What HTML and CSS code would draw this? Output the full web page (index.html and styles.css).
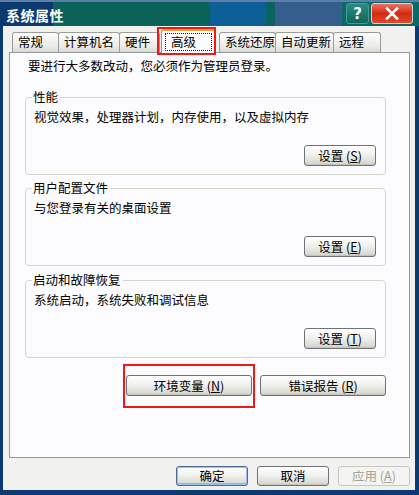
FILE: index.html
```html
<!DOCTYPE html>
<html lang="zh-CN">
<head>
<meta charset="utf-8">
<title>系统属性</title>
<link rel="stylesheet" href="styles.css">
</head>
<body>
<div class="window">
  <div class="titlebar">
    <span class="title">系统属性</span>
    <div class="tb-buttons">
      <div class="tb-btn help">?</div>
      <div class="tb-btn close">
        <svg width="14" height="13" viewBox="0 0 14 13"><path d="M2 1.5 L12 11.5 M12 1.5 L2 11.5" stroke="#fff" stroke-width="2.6" stroke-linecap="square"/></svg>
      </div>
    </div>
  </div>
  <div class="client">
    <div class="tabs">
      <div class="tab t1">常规</div>
      <div class="tab t2">计算机名</div>
      <div class="tab t3">硬件</div>
      <div class="tab selected"><span class="focus">高级</span><div class="mark mark-tab"></div></div>
      <div class="tab t5">系统还原</div>
      <div class="tab t6">自动更新</div>
      <div class="tab t7">远程</div>
    </div>
    <div class="panel">
      <p class="intro">要进行大多数改动，您必须作为管理员登录。</p>
      <div class="group">
        <span class="legend">性能</span>
        <p class="desc">视觉效果，处理器计划，内存使用，以及虚拟内存</p>
        <div class="group-actions"><button class="btn small">设置 (<u>S</u>)</button></div>
      </div>
      <div class="group">
        <span class="legend">用户配置文件</span>
        <p class="desc">与您登录有关的桌面设置</p>
        <div class="group-actions"><button class="btn small">设置 (<u>E</u>)</button></div>
      </div>
      <div class="group">
        <span class="legend">启动和故障恢复</span>
        <p class="desc">系统启动，系统失败和调试信息</p>
        <div class="group-actions"><button class="btn small">设置 (<u>T</u>)</button></div>
      </div>
      <div class="wide-row">
        <div class="marked"><button class="btn wide">环境变量 (<u>N</u>)</button><div class="mark mark-btn"></div></div>
        <button class="btn wide">错误报告 (<u>R</u>)</button>
      </div>
    </div>
    <div class="footer">
      <button class="btn foot default">确定</button>
      <button class="btn foot">取消</button>
      <button class="btn foot disabled">应用 (<u>A</u>)</button>
    </div>
  </div>
</div>
</body>
</html>
```

FILE: styles.css
```css
* { box-sizing: border-box; }
html, body { margin: 0; padding: 0; }
body {
  width: 419px;
  height: 495px;
  overflow: hidden;
  font-family: "Noto Sans CJK SC", "Noto Sans", sans-serif;
  font-size: 12px;
  color: #000;
  background: #0a2e62;
}
.window {
  width: 419px;
  height: 495px;
  display: flex;
  flex-direction: column;
  background: #0b3a72;
  padding: 0 4px 5px 3px;
}
.titlebar {
  height: 26px;
  flex: none;
  margin: 0 -4px 0 -3px;
  display: flex;
  align-items: center;
  justify-content: space-between;
  padding: 0 6px 0 6px;
  border-top: 2px solid #5b7fa8;
  background: linear-gradient(90deg,
    #0b3a70 0px, #0b3a70 53px,
    #0a6358 53px, #0a6358 210px,
    #0d5f98 210px, #0d5f98 266px,
    #0a6360 266px, #0a6360 275px,
    #335e8e 275px, #335e8e 342px,
    #0a6a66 342px, #0a6a66 419px);
}
.title {
  color: #fff;
  font-weight: bold;
  font-size: 14px;
  line-height: 16px;
  letter-spacing: 0.5px;
  margin-top: 1px;
}
.tb-buttons { display: flex; gap: 2px; align-items: center; margin-top: -1px; }
.tb-btn {
  height: 21px;
  border: 1px solid #c8d8e4;
  border-radius: 3px;
  display: flex;
  align-items: center;
  justify-content: center;
  color: #fff;
  font-family: "DejaVu Sans", sans-serif;
  font-weight: bold;
  font-size: 15px;
}
.help { width: 23px; background: linear-gradient(#2a8a84, #0d6860); border-color: #4c9a94; }
.close { width: 42px; background: linear-gradient(#f07060, #d42a10 50%, #e04a30); }
.client {
  flex: 1;
  background: #f1f1ef;
  padding: 3px 0 0 0;
  display: flex;
  flex-direction: column;
}
.tabs {
  display: flex;
  align-items: flex-end;
  height: 23px;
  flex: none;
  padding-left: 9px;
  position: relative;
  z-index: 2;
}
.tab {
  height: 20px;
  flex: none;
  white-space: nowrap;
  border: 1px solid #9a9c9a;
  border-bottom: none;
  border-radius: 3px 3px 0 0;
  background: linear-gradient(#ffffff, #ecebe6 70%, #dad9d2);
  padding: 0 0 0 5px;
  line-height: 18px;
  font-size: 12.5px;
  margin-right: -1px;
}
.t1 { width: 47px; }
.t2 { width: 62px; }
.t3 { width: 41px; }
.t5 { width: 57px; margin-left: 3px; }
.t6 { width: 59px; }
.t7 { width: 48px; }
.tab.selected {
  position: relative;
  height: 24px;
  width: 55px;
  margin: 0 0 -1px 2px;
  background: #fcfcfe;
  border-color: #919b9c;
  border-top: 2px solid #e7a33d;
  padding: 2px 3px 0 3px;
}
.focus {
  display: block;
  border: 1px dotted #222;
  line-height: 16px;
  padding-left: 5px;
}
.mark {
  position: absolute;
  border: 2px solid #f01818;
  pointer-events: none;
}
.mark-tab { left: -5px; top: -4px; width: 59px; height: 28px; }
.panel {
  height: 406px;
  flex: none;
  margin: 0 5px 0 6px;
  background: #fcfcfe;
  border: 1px solid #919b9c;
  padding: 6px 23px 0 15px;
  display: flex;
  flex-direction: column;
}
p { margin: 0; }
.intro { height: 14px; line-height: 14px; font-size: 12.5px; padding-left: 3px; margin-bottom: 24px; white-space: nowrap; flex: none; }
.group {
  position: relative;
  flex: none;
  height: 78px;
  border: 1px solid #d5d5cc;
  border-radius: 4px;
  padding: 12px 9px 0 8px;
  margin-bottom: 13px;
  display: flex;
  flex-direction: column;
}
.group:nth-of-type(2) { margin-bottom: 14px; }
.group:nth-of-type(3) { margin-bottom: 17px; }
.legend {
  position: absolute;
  left: 6px;
  top: -9px;
  background: #fcfcfe;
  padding: 0 2px 0 1px;
  line-height: 15px;
  font-size: 12.5px;
}
.desc { height: 14px; line-height: 14px; font-size: 12.5px; white-space: nowrap; }
.group-actions { display: flex; justify-content: flex-end; margin-top: 21px; }
.btn {
  font-family: "Noto Sans CJK SC", "Noto Sans", sans-serif;
  font-size: 12.5px;
  color: #000;
  height: 21px;
  line-height: 17px;
  padding: 0;
  border: 1px solid #6e737a;
  border-radius: 3px;
  background: linear-gradient(#ffffff, #f1f1ee 45%, #dcdcd6 85%, #cfcfc8);
  box-shadow: inset 0 -1px 0 #c4c4bc;
}
.btn u { text-decoration: underline; text-underline-offset: 1px; }
.small { width: 72px; }
.wide-row {
  display: flex;
  gap: 8px;
  justify-content: flex-end;
  flex: none;
}
.marked { position: relative; height: 21px; }
.wide { width: 126px; }
.mark-btn { left: -3px; top: -11px; width: 132px; height: 44px; }
.footer {
  display: flex;
  justify-content: flex-end;
  gap: 9px;
  padding: 8px 5px 0 0;
}
.foot { width: 72px; height: 20px; line-height: 16px; }
.default { border-color: #4a6b94; box-shadow: inset 0 0 0 1px #9ac2ee, inset 0 -2px 0 #8cb4e6; }
.disabled { color: #a4a49c; border-color: #c8c8c0; background: #f4f4f0; box-shadow: none; }
```
